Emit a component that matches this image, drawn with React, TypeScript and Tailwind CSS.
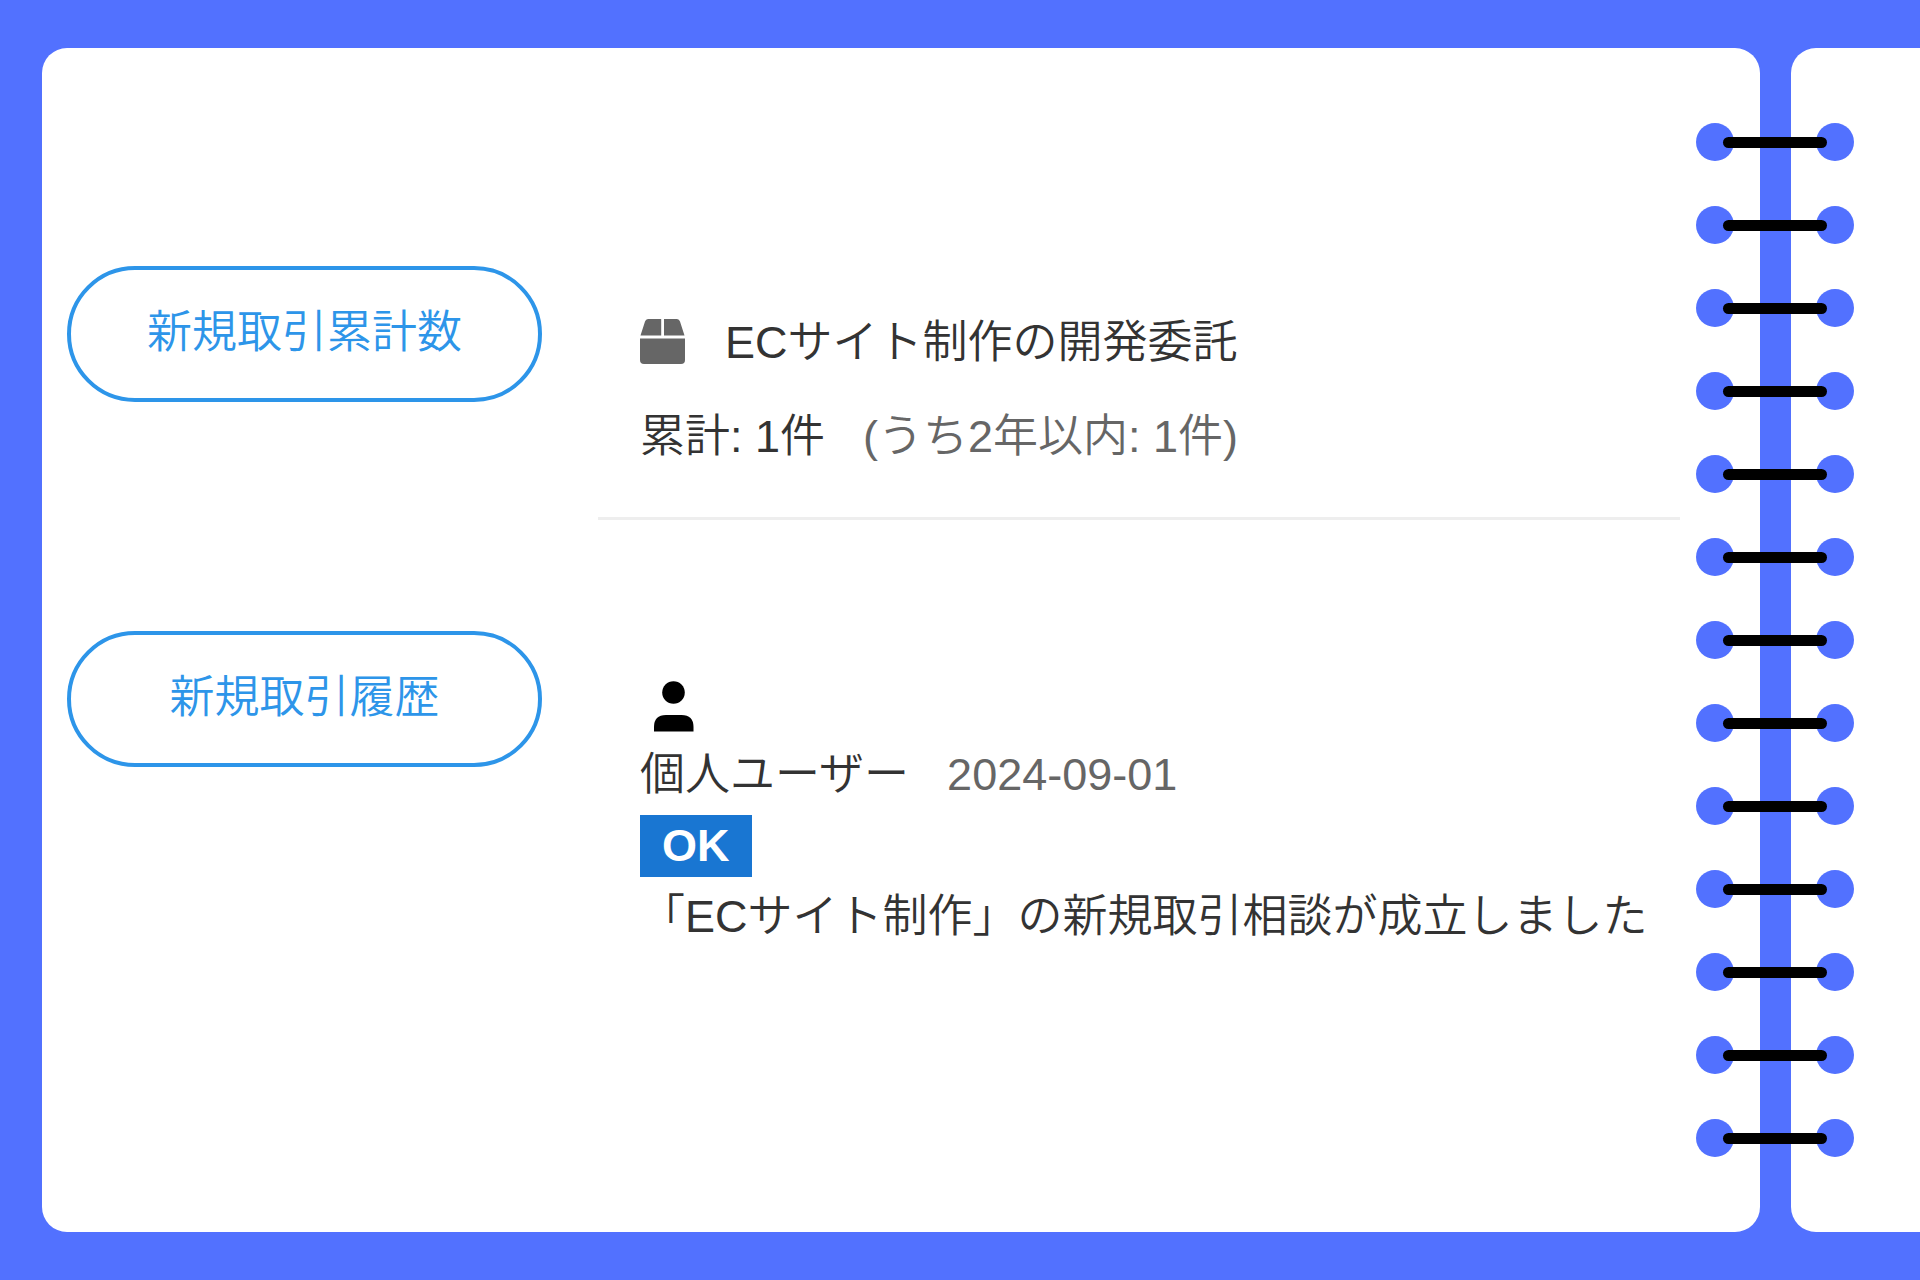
import type { ReactNode } from "react";

const RING_COUNT = 13;

function PackageIcon() {
  return (
    <svg viewBox="0 0 45 45" className="size-[45px] shrink-0 fill-[#666666]" aria-hidden="true">
      <path d="M8 0H21.200V16.500H0.500L5 2.500Q5.800 0 8 0Z" />
      <path d="M24 0H37Q39.200 0 40 2.500L44.500 16.500H24Z" />
      <path d="M0 19.500H45V41Q45 45 41 45H4Q0 45 0 41Z" />
    </svg>
  );
}

function PersonIcon() {
  return (
    <svg viewBox="0 0 40 51" className="ml-[14px] h-[51px] w-10 fill-black" aria-hidden="true">
      <circle cx="19.500" cy="11.500" r="11.300" />
      <path d="M0 50.500V46Q0 34 12 34H27.500Q39.500 34 39.500 46V50.500Z" />
    </svg>
  );
}

function PillButton({ children }: { children: ReactNode }) {
  return (
    <button
      type="button"
      className="h-[136px] w-full rounded-full border-4 border-[#2d95e9] pb-[2px] text-center font-[350] text-[#2d95e9]"
    >
      {children}
    </button>
  );
}

function Rings() {
  return (
    <div className="absolute top-[75px] -left-16 flex w-[158px] flex-col gap-[45px]" aria-hidden="true">
      {Array.from({ length: RING_COUNT }, (_, i) => (
        <div key={i} className="relative flex h-[38px] justify-between">
          <span className="size-[38px] rounded-full bg-[#5271ff]" />
          <span className="size-[38px] rounded-full bg-[#5271ff]" />
          <span className="absolute inset-x-[27px] top-[14px] h-[11px] rounded-full bg-black" />
        </div>
      ))}
    </div>
  );
}

export default function App() {
  return (
    <div className="flex min-h-screen overflow-hidden bg-[#5271ff] py-12 pl-[42px] font-['Liberation_Sans','Noto_Sans_CJK_JP',sans-serif] text-[45px] leading-[70px] font-[350] text-[#333333]">
      <main className="flex-1 rounded-[25px] bg-white pt-[218px] pr-20 pl-[25px]">
        <section className="grid grid-cols-[475px_1fr] gap-x-14">
          <div>
            <PillButton>新規取引累計数</PillButton>
          </div>
          <div className="border-b-3 border-[#eeeeee] pt-[42px] pb-[45px] pl-[42px] whitespace-nowrap">
            <h2 className="flex items-start gap-10">
              <span className="pt-[11px]">
                <PackageIcon />
              </span>
              <span>ECサイト制作の開発委託</span>
            </h2>
            <p className="mt-6 flex gap-[38px]">
              <span>累計: 1件</span>
              <span className="text-[#666666]">(うち2年以内: 1件)</span>
            </p>
          </div>
        </section>

        <section className="mt-[111px] grid grid-cols-[475px_1fr] gap-x-14">
          <div>
            <PillButton>新規取引履歴</PillButton>
          </div>
          <div className="pt-[50px] pl-[42px] whitespace-nowrap">
            <PersonIcon />
            <p className="mt-2 flex gap-[38px]">
              <span>個人ユーザー</span>
              <time dateTime="2024-09-01" className="text-[#666666]">
                2024-09-01
              </time>
            </p>
            <strong className="mt-[5px] block h-[62px] w-fit bg-[#1976d2] px-[22px] leading-[62px] font-bold text-white">
              OK
            </strong>
            <p className="mt-[5px]">「ECサイト制作」の新規取引相談が成立しました</p>
          </div>
        </section>
      </main>
      <div className="relative w-[31px] shrink-0">
        <Rings />
      </div>
      <div className="w-[129px] shrink-0 rounded-l-[25px] bg-white" />
    </div>
  );
}
